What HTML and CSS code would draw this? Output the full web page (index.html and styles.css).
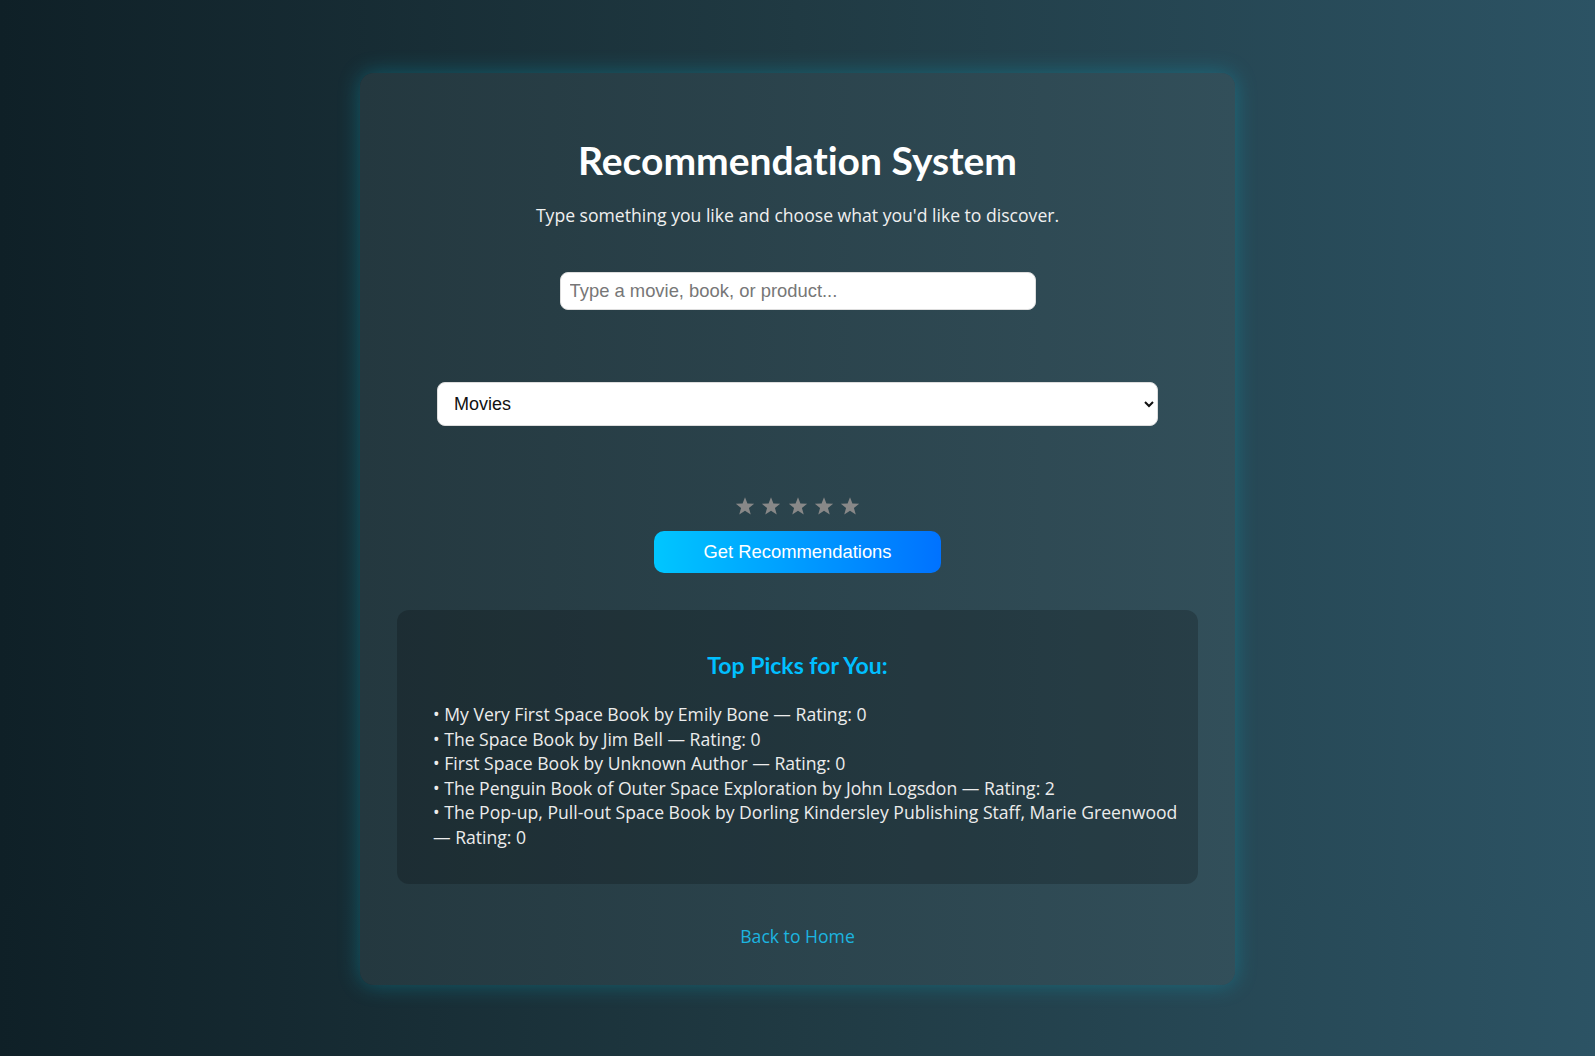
FILE: index.html
```html
<!DOCTYPE html>
<html lang="en">
<head>
<meta charset="utf-8">
<title>Recommendation System</title>
<link rel="stylesheet" href="styles.css">
</head>
<body>
  <main class="card">
    <h1 class="title">Recommendation System</h1>
    <p class="subtitle">Type something you like and choose what you'd like to discover.</p>
    <input class="query" type="text" placeholder="Type a movie, book, or product...">
    <select class="category">
      <option>Movies</option>
      <option>Books</option>
      <option>Products</option>
    </select>
    <div class="stars">
      <svg class="star" viewBox="0 0 24 24"><polygon points="12,1.5 14.9,9 23,9.3 16.7,14.3 18.9,22.2 12,17.7 5.1,22.2 7.3,14.3 1,9.3 9.1,9"/></svg>
      <svg class="star" viewBox="0 0 24 24"><polygon points="12,1.5 14.9,9 23,9.3 16.7,14.3 18.9,22.2 12,17.7 5.1,22.2 7.3,14.3 1,9.3 9.1,9"/></svg>
      <svg class="star" viewBox="0 0 24 24"><polygon points="12,1.5 14.9,9 23,9.3 16.7,14.3 18.9,22.2 12,17.7 5.1,22.2 7.3,14.3 1,9.3 9.1,9"/></svg>
      <svg class="star" viewBox="0 0 24 24"><polygon points="12,1.5 14.9,9 23,9.3 16.7,14.3 18.9,22.2 12,17.7 5.1,22.2 7.3,14.3 1,9.3 9.1,9"/></svg>
      <svg class="star" viewBox="0 0 24 24"><polygon points="12,1.5 14.9,9 23,9.3 16.7,14.3 18.9,22.2 12,17.7 5.1,22.2 7.3,14.3 1,9.3 9.1,9"/></svg>
    </div>
    <button class="go" type="button">Get Recommendations</button>
    <section class="results">
      <h3 class="results-title">Top Picks for You:</h3>
      <ul class="picks">
        <li>• My Very First Space Book by Emily Bone — Rating: 0</li>
        <li>• The Space Book by Jim Bell — Rating: 0</li>
        <li>• First Space Book by Unknown Author — Rating: 0</li>
        <li>• The Penguin Book of Outer Space Exploration by John Logsdon — Rating: 2</li>
        <li>• The Pop-up, Pull-out Space Book by Dorling Kindersley Publishing Staff, Marie Greenwood — Rating: 0</li>
      </ul>
    </section>
    <a class="home" href="#">Back to Home</a>
  </main>
</body>
</html>
```
FILE: styles.css
```css
html {
  background: #12232b;
}
body {
  margin: 0;
  padding: 73px 0 71px;
  font-family: "Segoe UI", "Open Sans", sans-serif;
  color: #fff;
  background: linear-gradient(to right, #0f2027, #203a43 50%, #2c5364);
  background-size: 100% 905px;
  min-height: 100vh;
  box-sizing: border-box;
}
.card {
  width: 801px;
  margin: 0 auto;
  padding: 37px 37px 37px;
  border-radius: 14px;
  background: linear-gradient(to right, #24383f, #324f5a);
  box-shadow: 0 0 22px rgba(0, 210, 240, 0.28);
  display: flex;
  flex-direction: column;
  align-items: center;
  text-align: center;
}
.title {
  margin: 26px 0 0;
  font-family: "Segoe UI", Lato, "Open Sans", sans-serif;
  font-size: 39px;
  line-height: 48px;
  font-weight: 700;
  font-variant-ligatures: none;
  color: #fff;
}
.subtitle {
  margin: 19px 0 0;
  font-size: 17.6px;
  line-height: 24px;
  color: #f0f0f0;
}
.query {
  margin-top: 45px;
  width: 476px;
  height: 38px;
  box-sizing: border-box;
  padding: 0 9px;
  border: 1px solid #ddd;
  border-radius: 8px;
  background: #fff;
  font-family: "Liberation Sans", Arial, sans-serif;
  font-size: 18.4px;
  color: #222;
  outline: none;
}
.query::placeholder {
  color: #777;
}
.category {
  margin-top: 72px;
  width: 721px;
  height: 44px;
  box-sizing: border-box;
  padding: 0 10px 0 12px;
  border: 1px solid #ddd;
  border-radius: 8px;
  background: #fff;
  font-family: "Liberation Sans", Arial, sans-serif;
  font-size: 18px;
  color: #111;
}
.stars {
  margin-top: 68px;
  height: 24px;
  display: flex;
  align-items: center;
  gap: 6.25px;
}
.star {
  width: 20px;
  height: 20px;
  fill: #888;
}
.go {
  margin-top: 13px;
  width: 287px;
  height: 42px;
  border: none;
  border-radius: 10px;
  background: linear-gradient(to right, #00c6ff, #0072ff);
  color: #fff;
  font-family: "Liberation Sans", Arial, sans-serif;
  font-size: 18.4px;
  cursor: pointer;
}
.results {
  margin-top: 37px;
  width: 801px;
  box-sizing: border-box;
  padding: 40px 36px 35px;
  border-radius: 12px;
  background: rgba(0, 0, 0, 0.2);
  text-align: left;
}
.results-title {
  margin: 0;
  text-align: center;
  font-family: "Segoe UI", Lato, "Open Sans", sans-serif;
  font-size: 23px;
  line-height: 30px;
  font-weight: 700;
  color: #00bfff;
}
.picks {
  margin: 22px -20px 0 0;
  padding: 0;
  list-style: none;
}
.picks li {
  font-size: 17.6px;
  line-height: 24.5px;
  color: #ececec;
}
.home {
  margin-top: 40px;
  font-size: 17.6px;
  line-height: 24px;
  color: #1cb5e0;
  text-decoration: none;
}
```
